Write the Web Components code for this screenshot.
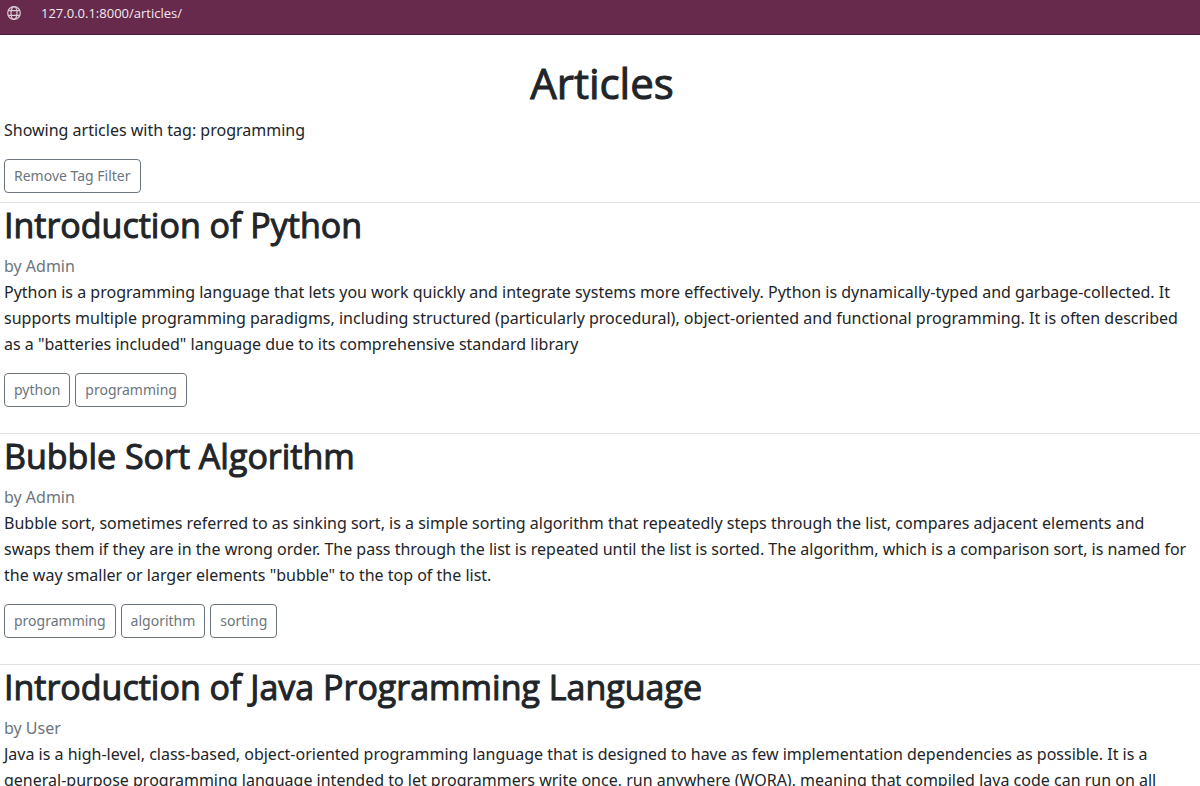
<!DOCTYPE html>
<html lang="en">
<head>
<meta charset="utf-8">
<title>Articles</title>
<style>
  body { margin: 0; background: #fff; color: #212529; font: 16px/26px "Noto Sans", "Open Sans", sans-serif; }
</style>
</head>
<body>
<address-bar url="127.0.0.1:8000/articles/"></address-bar>
<article-page>
  <span slot="title">Articles</span>
  <tag-filter tag="programming"></tag-filter>
  <article-entry author="Admin" tags="python,programming">
    <span slot="title">Introduction of Python</span>
    Python is a programming language that lets you work quickly and integrate systems more effectively. Python is dynamically-typed and garbage-collected. It<br>
    supports multiple programming paradigms, including structured (particularly procedural), object-oriented and functional programming. It is often described<br>
    as a "batteries included" language due to its comprehensive standard library
  </article-entry>
  <article-entry author="Admin" tags="programming,algorithm,sorting">
    <span slot="title">Bubble Sort Algorithm</span>
    Bubble sort, sometimes referred to as sinking sort, is a simple sorting algorithm that repeatedly steps through the list, compares adjacent elements and<br>
    swaps them if they are in the wrong order. The pass through the list is repeated until the list is sorted. The algorithm, which is a comparison sort, is named for<br>
    the way smaller or larger elements "bubble" to the top of the list.
  </article-entry>
  <article-entry author="User">
    <span slot="title">Introduction of Java Programming Language</span>
    Java is a high-level, class-based, object-oriented programming language that is designed to have as few implementation dependencies as possible. It is a<br>
    general-purpose programming language intended to let programmers write once, run anywhere (WORA), meaning that compiled Java code can run on all
  </article-entry>
</article-page>
<script>
class AddressBar extends HTMLElement {
  constructor() {
    super();
    this.attachShadow({ mode: "open" }).innerHTML = `
      <style>
        :host { display: flex; align-items: center; gap: 20px; box-sizing: border-box; height: 35px;
                padding: 0 7px 8px; background: #682a4c; border-bottom: 1px solid #4d1b37; }
        svg { flex: none; display: block; }
        input { flex: 1; min-width: 0; margin: 0; padding: 0; border: 0; outline: 0; background: none;
                color: #f3e9ee; font: 13px/18px "Open Sans", "Noto Sans", sans-serif; }
      </style>
      <svg width="14" height="14" viewBox="0 0 14 14" fill="none" stroke="#dccbd4" stroke-width="1.2" aria-hidden="true">
        <circle cx="7" cy="7" r="6.3"/><ellipse cx="7" cy="7" rx="3" ry="6.3"/>
        <path d="M1.2 4.6h11.6M1.2 9.4h11.6"/>
      </svg>
      <input type="text" aria-label="Address">`;
  }
  connectedCallback() { this.shadowRoot.querySelector("input").value = this.getAttribute("url"); }
}
customElements.define("address-bar", AddressBar);

class ArticlePage extends HTMLElement {
  constructor() {
    super();
    this.attachShadow({ mode: "open" }).innerHTML = `
      <style>
        :host { display: block; padding-top: 22px; }
        h1 { margin: 0 0 8px; padding-left: 4px; text-align: center; font: 400 42px/52px "Open Sans", "Noto Sans", sans-serif;
             -webkit-text-stroke: 1px currentColor; }
      </style>
      <h1><slot name="title"></slot></h1>
      <main><slot></slot></main>`;
  }
}
customElements.define("article-page", ArticlePage);

class TagButton extends HTMLElement {
  constructor() {
    super();
    this.attachShadow({ mode: "open" }).innerHTML = `
      <style>
        :host { display: block; }
        button { display: block; height: 34px; margin: 0; padding: 0 9px; border: 1px solid #6c757d; border-radius: 4px;
                 background: #fff; color: #6c757d; font: 14px/24px "Noto Sans", "Open Sans", sans-serif; cursor: pointer; }
        button:hover { background: #6c757d; color: #fff; }
      </style>
      <button type="button"><slot></slot></button>`;
  }
}
customElements.define("tag-button", TagButton);

class TagFilter extends HTMLElement {
  constructor() {
    super();
    this.attachShadow({ mode: "open" }).innerHTML = `
      <style>
        :host { display: flex; flex-direction: column; align-items: flex-start; gap: 16px; padding: 0 4px 9px; }
        p { margin: 0; }
      </style>
      <p></p>
      <tag-button>Remove Tag Filter</tag-button>`;
  }
  connectedCallback() {
    this.shadowRoot.querySelector("p").textContent = "Showing articles with tag: " + this.getAttribute("tag");
  }
}
customElements.define("tag-filter", TagFilter);

class ArticleEntry extends HTMLElement {
  constructor() {
    super();
    this.attachShadow({ mode: "open" }).innerHTML = `
      <style>
        :host { display: block; border-top: 1px solid #dee2e6; padding: 0 0 26px 4px; }
        h2 { margin: 0 0 6px; font: 400 34px/44px "Open Sans", "Noto Sans", sans-serif;
             -webkit-text-stroke: 1px currentColor; }
        p { margin: 0; }
        .author { color: #6c757d; }
        .text { margin-bottom: 16px; white-space: nowrap; }
        .tags { display: flex; flex-wrap: wrap; gap: 5px; }
      </style>
      <h2><slot name="title"></slot></h2>
      <p class="author"></p>
      <p class="text"><slot></slot></p>
      <div class="tags"></div>`;
  }
  connectedCallback() {
    this.shadowRoot.querySelector(".author").textContent = "by " + this.getAttribute("author");
    const tags = (this.getAttribute("tags") || "").split(",").filter(Boolean);
    this.shadowRoot.querySelector(".tags").replaceChildren(...tags.map(name => {
      const tag = document.createElement("tag-button");
      tag.textContent = name;
      return tag;
    }));
  }
}
customElements.define("article-entry", ArticleEntry);
</script>
</body>
</html>
